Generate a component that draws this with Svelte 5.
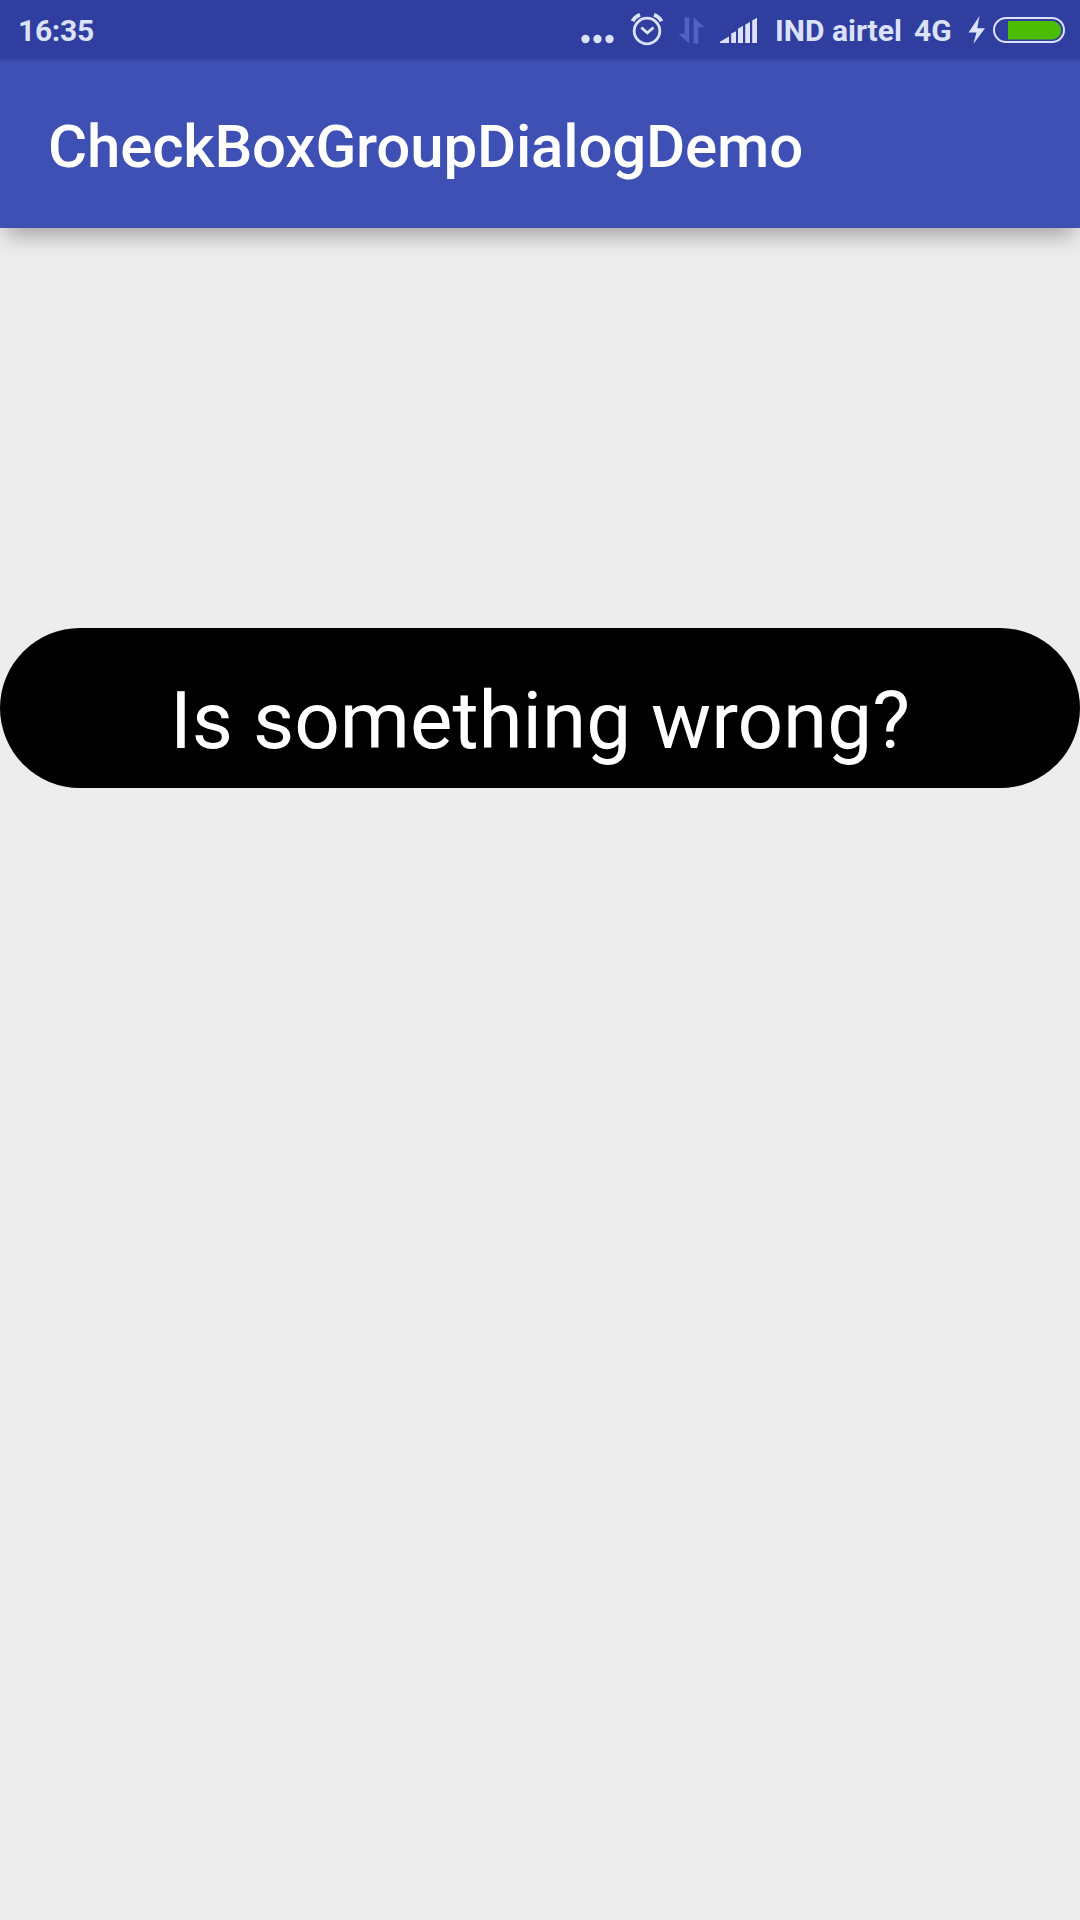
<script>
  const time = '16:35';
  const carrier = 'IND airtel';
  const network = '4G';
  const title = 'CheckBoxGroupDialogDemo';
  const message = 'Is something wrong?';
</script>

<div class="screen">
  <header>
    <div class="status">
      <span class="time">{time}</span>
      <svg class="dots" width="33" height="60" viewBox="0 0 33 60" fill="currentColor">
        <circle cx="4.5" cy="39" r="4.2" /><circle cx="16.5" cy="39" r="4.2" /><circle cx="28.5" cy="39" r="4.2" />
      </svg>
      <svg class="alarm" width="33" height="60" viewBox="0 0 33 60" fill="none" stroke="currentColor">
        <circle cx="17" cy="31" r="12.8" stroke-width="2.8" />
        <path d="M11.3 27.5L17.3 32.8L23.5 27.5" stroke-width="2.8" />
        <path d="M2.5 21.2C4 18.3 6.7 16 10 14.7M24 14.7C27.3 16 30 18.3 31.5 21.2" stroke-width="3.8" />
      </svg>
      <svg class="data" width="27" height="60" viewBox="0 0 27 60" fill="currentColor">
        <path d="M11.2 17.5V43.5L0.5 33.8H6.6V17.5ZM15.6 43.5V17.5L26.5 27.2H20.3V43.5Z" />
      </svg>
      <svg class="signal" width="38" height="60" viewBox="0 0 38 60" fill="currentColor">
        <path d="M0 43V41.8L9 36.6V43ZM11.2 43V33.5L16 31.2V43ZM18 43V28.7L23 25.8V43ZM25.2 43V24.8L30 22V43ZM32.2 43V20.5L37 17.7V43Z" />
      </svg>
      <span class="carrier">{carrier}</span>
      <span class="network">{network}</span>
      <svg class="power" width="97" height="60" viewBox="0 0 97 60">
        <path d="M11.5 16L0.5 32.5H8.5L5.3 44L17 28.2H9.3Z" fill="currentColor" />
        <rect x="26" y="18" width="70" height="24" rx="12" fill="none" stroke="currentColor" stroke-width="2" />
        <path d="M40 21H84A9.2 9.2 0 0 1 84 39.4H40Z" fill="#4abd04" />
      </svg>
    </div>
    <h1>{title}</h1>
  </header>
  <main>
    <button>{message}</button>
  </main>
</div>

<style>
  :global(body) {
    margin: 0;
  }
  .screen {
    width: 1080px;
    height: 1920px;
    overflow: hidden;
    display: flex;
    flex-direction: column;
    background: #ededee;
    font-family: Roboto, sans-serif;
  }
  header {
    height: 228px;
    flex: none;
    color: #fff;
    background: linear-gradient(#303f9f 0 57px, #3f50b5 63px);
    box-shadow: 0 14px 20px -6px rgba(0, 0, 0, 0.3);
  }
  .status {
    height: 60px;
    box-sizing: border-box;
    padding: 0 15px 0 18px;
    display: flex;
    align-items: center;
    color: #dce2fa;
    font-size: 30px;
    font-weight: 700;
    line-height: 60px;
    white-space: nowrap;
  }
  .status svg {
    flex: none;
  }
  .time {
    margin-right: auto;
    letter-spacing: -0.3px;
    position: relative;
    top: 1px;
  }
  .alarm {
    margin-left: 16.5px;
  }
  .data {
    margin-left: 15px;
    color: #5262c4;
  }
  .signal {
    margin-left: 15px;
  }
  .carrier {
    width: 127px;
    margin-left: 17px;
    padding-top: 1px;
  }
  .network {
    width: 39px;
    margin-left: 12px;
    padding-top: 1px;
  }
  .power {
    margin-left: 15px;
  }
  h1 {
    margin: 0;
    padding: 51px 0 0 48px;
    font-size: 60px;
    line-height: 72px;
    font-weight: 500;
    letter-spacing: -0.17px;
    white-space: nowrap;
  }
  main {
    flex: 1;
    padding-top: 400px;
  }
  button {
    display: block;
    width: 100%;
    height: 160px;
    box-sizing: border-box;
    padding: 25px 0 0;
    border: 0;
    border-radius: 80px;
    background: #000;
    color: #fff;
    font-family: inherit;
    font-size: 80px;
    line-height: 100px;
    text-align: center;
    white-space: nowrap;
  }
</style>
